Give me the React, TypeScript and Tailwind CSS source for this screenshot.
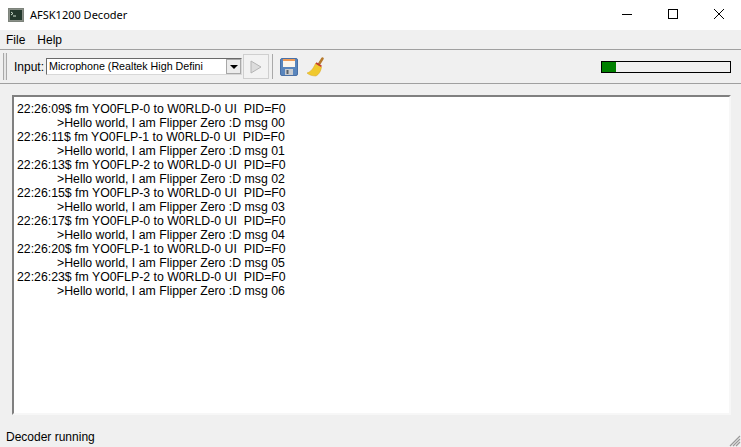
const rows = [
  ["22:26:09", "0", "00"],
  ["22:26:11", "1", "01"],
  ["22:26:13", "2", "02"],
  ["22:26:15", "3", "03"],
  ["22:26:17", "0", "04"],
  ["22:26:20", "1", "05"],
  ["22:26:23", "2", "06"],
];

export default function App() {
  return (
    <div className="w-[741px] h-[447px] overflow-hidden flex flex-col bg-[#f0f0f0] text-black text-[12px] relative" style={{ fontFamily: '"Liberation Sans", sans-serif' }}>
      <div className="h-[30px] shrink-0 bg-white flex items-center">
        <svg width="16" height="14" viewBox="0 0 16 14" className="ml-[8px] mr-[6px]">
          <rect x="0.5" y="0.5" width="15" height="13" fill="#8a9088" stroke="#7d837b" />
          <rect x="2" y="2" width="12" height="10" fill="#23382c" />
          <path d="M3 4l2 1.5L3 7M5 8h3" stroke="#d5e5d5" strokeWidth="1" fill="none" />
        </svg>
        <span className="text-[11px]" style={{ fontFamily: '"Noto Sans", sans-serif' }}>AFSK1200 Decoder</span>
        <div className="ml-auto flex items-center">
          <svg width="46" height="30" viewBox="0 0 46 30"><path d="M18 14.5h10" stroke="#000" /></svg>
          <svg width="46" height="30" viewBox="0 0 46 30"><rect x="18.5" y="9.5" width="9" height="9" fill="none" stroke="#000" /></svg>
          <svg width="46" height="30" viewBox="0 0 46 30" className="mr-[-1px]"><path d="M18 9l10 10M28 9L18 19" stroke="#000" /></svg>
        </div>
      </div>

      <div className="h-[19px] shrink-0 flex items-center gap-[12px] pl-[6px]">
        <span>File</span>
        <span>Help</span>
      </div>
      <div className="h-[35px] shrink-0 border-t border-b border-[#a0a0a0] flex items-center">
        <div className="ml-[3px] w-[4px] h-[27px] border-x border-[#a9a9a9] bg-[#e6e6e6]" />
        <span className="ml-[7px]">Input:</span>
        <div className="ml-[2px] w-[196px] h-[17px] bg-white border border-t-[#6a6a6a] border-l-[#6a6a6a] border-r-[#d8d8d8] border-b-[#d8d8d8] flex items-center pl-[2px] relative text-[10.7px]">
          <span>Microphone (Realtek High Defini</span>
          <div className="absolute right-0 top-0 w-[15px] h-[15px] bg-[#ececec] border border-[#a8a8a8] flex items-center justify-center">
            <svg width="8" height="4" viewBox="0 0 8 4"><path d="M0 0h8L4 4z" fill="#000" /></svg>
          </div>
        </div>
        <div className="ml-[1px] w-[26px] h-[25px] border border-[#cfcfcf] flex items-center justify-center bg-[#f2f2f2]">
          <svg width="12" height="14" viewBox="0 0 12 14"><path d="M1 1l10 6L1 13z" fill="#dcdcdc" stroke="#b4b4b4" /></svg>
        </div>
        <div className="ml-[3px] w-px h-[25px] bg-[#a9a9a9]" />
        <svg width="18" height="18" viewBox="0 0 18 18" className="ml-[7px]">
          <rect x="0.5" y="0.5" width="17" height="17" rx="1.5" fill="#5a86bd" stroke="#4a70a5" />
          <rect x="3" y="1" width="12" height="8" fill="#fdf6ec" />
          <rect x="3" y="1" width="12" height="2" fill="#ef9a55" />
          <rect x="5" y="11" width="8" height="6" fill="#c9ccd0" />
          <rect x="6.500" y="12" width="2" height="4" fill="#59616b" />
        </svg>
        <svg width="20" height="20" viewBox="0 0 20 20" className="ml-[8px]">
          <path d="M12.500 8L16.500 1.500" stroke="#b67a2c" strokeWidth="2.500" strokeLinecap="round" />
          <path d="M9.500 6.500l6 3.500C15 14 13 17.500 10 19c-3.500 0-7-1-9-3 3.500-1 6-4 8.500-9.500z" fill="#f0c92e" stroke="#d9a520" strokeWidth="0.5" />
          <path d="M10 6l5.500 3.400" stroke="#c4392b" strokeWidth="1.600" />
        </svg>
        <div className="ml-auto mr-[10px] w-[130px] h-[12px] border border-black">
          <div className="w-[14px] h-full bg-[#008000]" />
        </div>
      </div>

      <div className="flex-1 px-[12px] pt-[11px] pb-[10px] flex">
        <div className="flex-1 mr-[-2px] bg-white border-2 border-t-[#808080] border-l-[#808080] border-r-[#f7f7f7] border-b-[#f7f7f7] pl-[3px] pt-[5px] leading-[14px] whitespace-pre text-[12.3px]">
          {rows.map(([t, n, m]) => (
            <div key={t}>
              <div>{`${t}$ fm YO0FLP-${n} to W0RLD-0 UI  PID=F0`}</div>
              <div className="pl-[40px]">{`>Hello world, I am Flipper Zero :D msg ${m}`}</div>
            </div>
          ))}
        </div>
      </div>

      <div className="h-[22px] shrink-0 flex items-center pl-[6px] pt-[2px]">Decoder running</div>
      <svg width="12" height="12" viewBox="0 0 12 12" className="absolute right-0 bottom-0">
        <path d="M11 1L1 11M11 4L4 11M11 7L7 11" stroke="#9a9a9a" strokeWidth="1.2" />
      </svg>
    </div>
  );
}
